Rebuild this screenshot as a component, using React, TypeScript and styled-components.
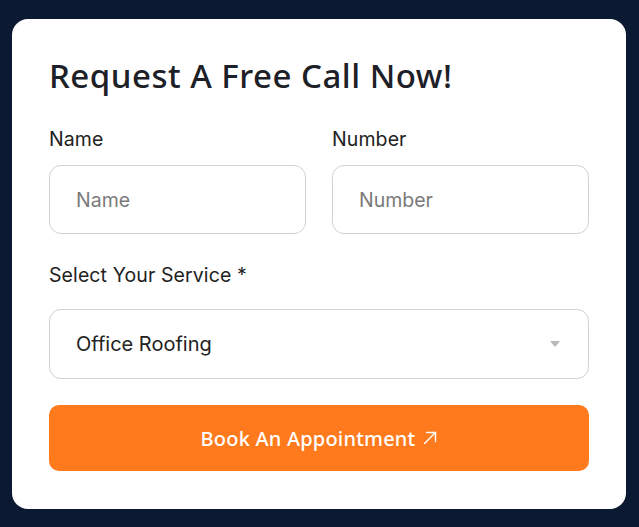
import React from 'react';
import styled, { createGlobalStyle } from 'styled-components';

const GlobalStyle = createGlobalStyle`
  html, body {
    margin: 0;
    padding: 0;
    background: #0b1a32;
  }
  body {
    font-family: Inter, "Noto Sans", sans-serif;
  }
`;

const Page = styled.div`
  padding: 19px 13px 19px 12px;
  min-height: 100vh;
  box-sizing: border-box;
`;

const Card = styled.form`
  background: #fff;
  border-radius: 16px;
  padding: 37px 37px 38px 37px;
  width: 614px;
  box-sizing: border-box;
`;

const Title = styled.h2`
  margin: 0 0 31px 0;
  font-family: "Noto Sans", sans-serif;
  font-weight: 500;
  font-size: 33px;
  line-height: 40px;
  color: #1d2027;
  letter-spacing: 0.5px;
`;

const Grid = styled.div`
  display: grid;
  grid-template-columns: minmax(0, 1fr) minmax(0, 1fr);
  column-gap: 26px;
`;

const Field = styled.div<{ $gap?: number }>`
  display: flex;
  flex-direction: column;
  min-width: 0;
  margin-bottom: ${({ $gap }) => $gap ?? 0}px;
`;

const Label = styled.label<{ $space?: number }>`
  font-family: Inter, sans-serif;
  font-size: 19.5px;
  line-height: 24px;
  letter-spacing: 0.1px;
  color: #222;
  margin-bottom: ${({ $space }) => $space ?? 14}px;
`;

const Input = styled.input`
  width: 100%;
  min-width: 0;
  height: 69px;
  box-sizing: border-box;
  border: 1px solid #d2d2d2;
  border-radius: 12px;
  padding: 0 26px;
  font-family: Inter, sans-serif;
  font-size: 19.5px;
  color: #222;
  outline: none;
  &::placeholder {
    color: #7a7a7a;
  }
`;

const SelectBox = styled.div`
  height: 70px;
  box-sizing: border-box;
  border: 1px solid #d2d2d2;
  border-radius: 12px;
  padding: 0 26px;
  display: flex;
  align-items: center;
  justify-content: space-between;
  font-family: Inter, sans-serif;
  font-size: 20px;
  color: #222;
`;

const Caret = styled.span`
  width: 0;
  height: 0;
  border-left: 5px solid transparent;
  border-right: 5px solid transparent;
  border-top: 6px solid #b9b9b9;
  margin-right: 2px;
`;

const Button = styled.button`
  width: 100%;
  height: 66px;
  margin-top: 26px;
  border: none;
  border-radius: 10px;
  background: #ff7a1c;
  color: #fff;
  font-family: "Noto Sans", sans-serif;
  font-weight: 500;
  font-size: 20px;
  letter-spacing: 0.2px;
  display: flex;
  align-items: center;
  justify-content: center;
  gap: 8px;
  cursor: pointer;
`;

const ArrowIcon = () => (
  <svg width="14" height="14" viewBox="0 0 14 14" fill="none" stroke="currentColor" strokeWidth="1.4" strokeLinecap="round" strokeLinejoin="round">
    <path d="M1.5 12.5 12.5 1.5" />
    <path d="M3.5 1.5h9v9" />
  </svg>
);

export default function App() {
  return (
    <>
      <GlobalStyle />
      <Page>
        <Card onSubmit={e => e.preventDefault()}>
          <Title>Request A Free Call Now!</Title>
          <Grid>
            <Field $gap={29}>
              <Label>Name</Label>
              <Input placeholder="Name" />
            </Field>
            <Field $gap={29}>
              <Label>Number</Label>
              <Input placeholder="Number" />
            </Field>
          </Grid>
          <Field>
            <Label $space={22}>Select Your Service *</Label>
            <SelectBox>
              Office Roofing
              <Caret />
            </SelectBox>
          </Field>
          <Button type="submit">
            Book An Appointment
            <ArrowIcon />
          </Button>
        </Card>
      </Page>
    </>
  );
}
